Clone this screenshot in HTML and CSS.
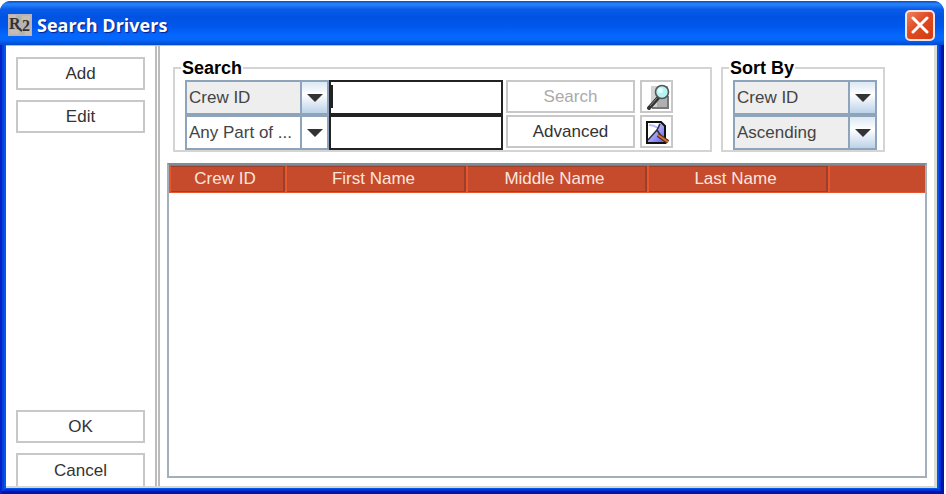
FILE: index.html
```html
<!DOCTYPE html>
<html lang="en">
<head>
    <meta charset="UTF-8">
    <meta name="viewport" content="width=device-width, initial-scale=1.0">
    <title>Search Drivers</title>
    <link rel="stylesheet" href="styles.css">
</head>
<body>
    <div class="window">
        <header class="titlebar">
            <svg class="app-icon" width="24" height="22" viewBox="0 0 24 22" aria-hidden="true">
                <rect width="24" height="22" fill="#b9b3b4"/>
                <path d="M1 1h7v4H1zM14 2h8v5h-8zM2 16h9v4H2zM17 15h6v6h-6z" fill="#c9bcb2"/>
                <path d="M9 2h4v5H9zM1 9h3v5H1zM12 16h4v4h-4z" fill="#a9b8a9"/>
                <text x="1" y="15" class="app-letter">R</text>
                <text x="14" y="17" class="app-letter">2</text>
                <path d="M10 14l4 3" stroke="#333" stroke-width="2"/>
            </svg>
            <h1>Search Drivers</h1>
            <button type="button" class="close" aria-label="Close">
                <svg width="18" height="18" viewBox="0 0 18 18">
                    <path d="M2 2l14 14M16 2L2 16" stroke="#fff" stroke-width="3" stroke-linecap="round"/>
                </svg>
            </button>
        </header>

        <div class="client">
            <!-- Left side actions -->
            <nav class="sidebar">
                <button type="button" class="btn">Add</button>
                <button type="button" class="btn">Edit</button>
                <span class="spacer"></span>
                <button type="button" class="btn">OK</button>
                <button type="button" class="btn">Cancel</button>
            </nav>

            <main class="main">
                <form class="toolbar">
                    <fieldset class="group search-group">
                        <legend>Search</legend>
                        <div class="search-grid">
                            <div class="combo">
                                <select aria-label="Search field">
                                    <option>Crew ID</option>
                                    <option>First Name</option>
                                    <option>Middle Name</option>
                                    <option>Last Name</option>
                                </select>
                                <span class="arrow"></span>
                            </div>
                            <input type="text" class="field active" aria-label="Search text">
                            <button type="button" class="btn find" disabled>Search</button>
                            <button type="button" class="btn icon-btn" aria-label="Find">
                                <svg width="26" height="26" viewBox="0 0 26 26">
                                    <path d="M7 2h17v22H7z" fill="#b0b0b0"/>
                                    <path d="M7 2h6v22H7z" fill="#d2d2d2"/>
                                    <path d="M8 24h16V12" fill="none" stroke="#777" stroke-width="2"/>
                                    <path d="M14 14L5 24" stroke="#333" stroke-width="4" stroke-linecap="round"/>
                                    <path d="M13 14L6 22" stroke="#888" stroke-width="1"/>
                                    <circle cx="18" cy="8" r="6.5" fill="#b5f4f5" stroke="#555" stroke-width="1.6"/>
                                    <circle cx="16.500" cy="6.500" r="2.500" fill="#e4ffff"/>
                                </svg>
                            </button>

                            <div class="combo plain">
                                <select aria-label="Match type">
                                    <option>Any Part of ...</option>
                                </select>
                                <span class="arrow"></span>
                            </div>
                            <input type="text" class="field" aria-label="Match text">
                            <button type="button" class="btn find">Advanced</button>
                            <button type="button" class="btn icon-btn" aria-label="Advanced find">
                                <svg width="26" height="26" viewBox="0 0 26 26">
                                    <defs>
                                        <linearGradient id="page" x1="0" y1="0" x2="1" y2="1">
                                            <stop offset="0" stop-color="#eef"/>
                                            <stop offset="1" stop-color="#5a5af0"/>
                                        </linearGradient>
                                    </defs>
                                    <path d="M3 3h14l4 4v17H3z" fill="url(#page)" stroke="#111" stroke-width="2"/>
                                    <path d="M4 4h11l-2 7-9 10z" fill="#fff"/>
                                    <path d="M5 6q5 0 9 3" fill="none" stroke="#b8b8ff" stroke-width="2"/>
                                    <path d="M4 21l9-10 3-6M13 11l4 6" fill="none" stroke="#334" stroke-width="1.6"/>
                                    <path d="M14 16l10 7" stroke="#5a2a10" stroke-width="4"/>
                                    <path d="M14 16l10 7" stroke="#d0713a" stroke-width="2"/>
                                </svg>
                            </button>
                        </div>
                    </fieldset>

                    <fieldset class="group">
                        <legend>Sort By</legend>
                        <div class="sort-grid">
                            <div class="combo">
                                <select aria-label="Sort field">
                                    <option>Crew ID</option>
                                    <option>First Name</option>
                                    <option>Last Name</option>
                                </select>
                                <span class="arrow"></span>
                            </div>
                            <div class="combo">
                                <select aria-label="Sort order">
                                    <option>Ascending</option>
                                    <option>Descending</option>
                                </select>
                                <span class="arrow"></span>
                            </div>
                        </div>
                    </fieldset>
                </form>

                <!-- Results -->
                <div class="results">
                    <table>
                        <colgroup>
                            <col class="col-id">
                            <col class="col-name">
                            <col class="col-name">
                            <col class="col-name">
                            <col>
                        </colgroup>
                        <thead>
                            <tr>
                                <th>Crew ID</th>
                                <th>First Name</th>
                                <th>Middle Name</th>
                                <th>Last Name</th>
                                <td></td>
                            </tr>
                        </thead>
                        <tbody></tbody>
                    </table>
                </div>
            </main>
        </div>
    </div>
</body>
</html>
```

FILE: styles.css
```css
/* Reset */
* {
    margin: 0;
    padding: 0;
    box-sizing: border-box;
}

body {
    font-family: "Liberation Sans", Arial, sans-serif;
    font-size: 17px;
    color: #444;
    background: #fff;
}

button, input, select {
    font: inherit;
    color: inherit;
}

svg {
    display: block;
}

/* Window frame */
.window {
    display: flex;
    flex-direction: column;
    height: 100vh;
    padding: 0 7px 6px 6px;
    border: 0 solid #fff;
    border-width: 1px 2px 0 0;
    border-radius: 12px 12px 0 0;
    background: #0058ee;
    background-clip: padding-box;
    box-shadow: inset 2px 0 0 #0022c8, inset -3px -3px 0 #0014a8, inset 4px 0 0 #0840dc, inset -5px -5px 0 #0030d4;
}

/* Title bar */
.titlebar {
    display: flex;
    align-items: center;
    gap: 5px;
    height: 44px;
    flex-shrink: 0;
    margin: 0 -7px 0 -6px;
    padding: 4px 9px 0 8px;
    border-radius: 10px 10px 0 0;
    background: linear-gradient(#0848c8 0, #2a86fa 3px, #0a5ce8 8px, #0053e1 16px, #0058ee 26px, #0567fd 34px, #0566fa 39px, #0348cc 44px);
}

.app-letter {
    font: bold 16px "Liberation Serif", serif;
    fill: #333;
}

h1 {
    flex: 1;
    font: bold 18px/24px "Open Sans", sans-serif;
    color: #fff;
    text-shadow: 1px 1px 1px #0a1f8c;
}

.close {
    display: grid;
    place-items: center;
    width: 30px;
    height: 31px;
    border: 2px solid #f4e4e4;
    border-radius: 5px;
    background: linear-gradient(135deg, #ee8262, #e04a22 45%, #d23c12);
}

/* Client area */
.client {
    display: flex;
    flex: 1;
    min-height: 0;
    background: #fff;
    border-top: 1px solid #bbb;
    border-right: 3px solid #dcdcd8;
    border-bottom: 2px solid #d8d8d0;
}

.sidebar {
    display: flex;
    flex-direction: column;
    gap: 10px;
    width: 154px;
    flex-shrink: 0;
    padding: 11px 10px 0;
    border-right: 5px double #bbb;
    overflow: hidden;
}

.btn {
    flex-shrink: 0;
    height: 33px;
    padding-top: 1px;
    border: 2px solid #c8c8c8;
    background: #fff;
    color: #333;
}

.sidebar .btn:last-child {
    border-bottom: 0;
}

.spacer {
    flex: 1;
}

.btn:disabled {
    color: #aaa;
}

.main {
    display: flex;
    flex-direction: column;
    flex: 1;
    min-width: 0;
    padding: 12px 7px 8px 7px;
}

/* Search and sort boxes */
.toolbar {
    display: flex;
    align-items: flex-start;
    gap: 9px;
    padding-left: 6px;
    margin-bottom: 11px;
}

.group {
    border: 2px solid #d4d4d4;
    padding: 2px 6px 0 10px;
}

legend {
    margin-left: -4px;
    padding: 0 1px;
    font-size: 18px;
    line-height: 20px;
    font-weight: bold;
    color: #000;
}

.search-group {
    padding-right: 37px;
}

.search-grid {
    display: grid;
    grid-template-columns: 144px 174px 132px 38px;
    grid-template-rows: 35px 35px;
}

.search-grid .find {
    margin-left: 3px;
}

.icon-btn {
    display: grid;
    place-items: center;
    margin-left: 5px;
    padding: 0;
}

.sort-grid {
    display: grid;
    grid-template-columns: 144px;
    grid-template-rows: 35px 35px;
}

.combo {
    position: relative;
    border: 2px solid #8da4ba;
    background: #eee;
}

.combo select {
    appearance: none;
    width: 100%;
    height: 100%;
    padding: 0 28px 0 2px;
    border: 0;
    background: transparent;
}

.arrow {
    position: absolute;
    top: 0;
    right: 0;
    bottom: 0;
    width: 27px;
    border-left: 2px solid #8da4ba;
    background: linear-gradient(#dce8f3, #fff 40%, #bcd2e8);
    pointer-events: none;
}

.arrow::after {
    content: "";
    position: absolute;
    top: 12px;
    left: 5px;
    border: 8px solid transparent;
    border-top-color: #333;
    border-bottom: 0;
}

.plain,
.plain .arrow {
    background: #fff;
}

.field {
    min-width: 0;
    padding: 0 5px;
    border: 2px solid #222;
    border-radius: 0;
    background: #fff;
    outline: none;
}

/* Insertion mark of the current field */
.active {
    background: linear-gradient(#222, #222) 0 3px / 2px 23px no-repeat #fff;
}

/* Results table */
.results {
    flex: 1;
    min-height: 0;
    border: 2px solid #a4afbc;
    border-top-color: #7f8c97;
    overflow: auto;
}

table {
    width: 100%;
    table-layout: fixed;
    border-collapse: separate;
    border-spacing: 0;
    background: #c64a2c;
}

.col-id {
    width: 116px;
}

.col-name {
    width: 181px;
}

th,
thead td {
    height: 28px;
    border: 1px solid #e8562e;
    border-width: 1px 0 1px 2px;
}

th {
    padding-right: 6px;
    font-size: 17px;
    font-weight: normal;
    color: #fbe6de;
    box-shadow: inset -2px -1px 0 #98402c, inset 0 1px 0 #98402c;
}
```
